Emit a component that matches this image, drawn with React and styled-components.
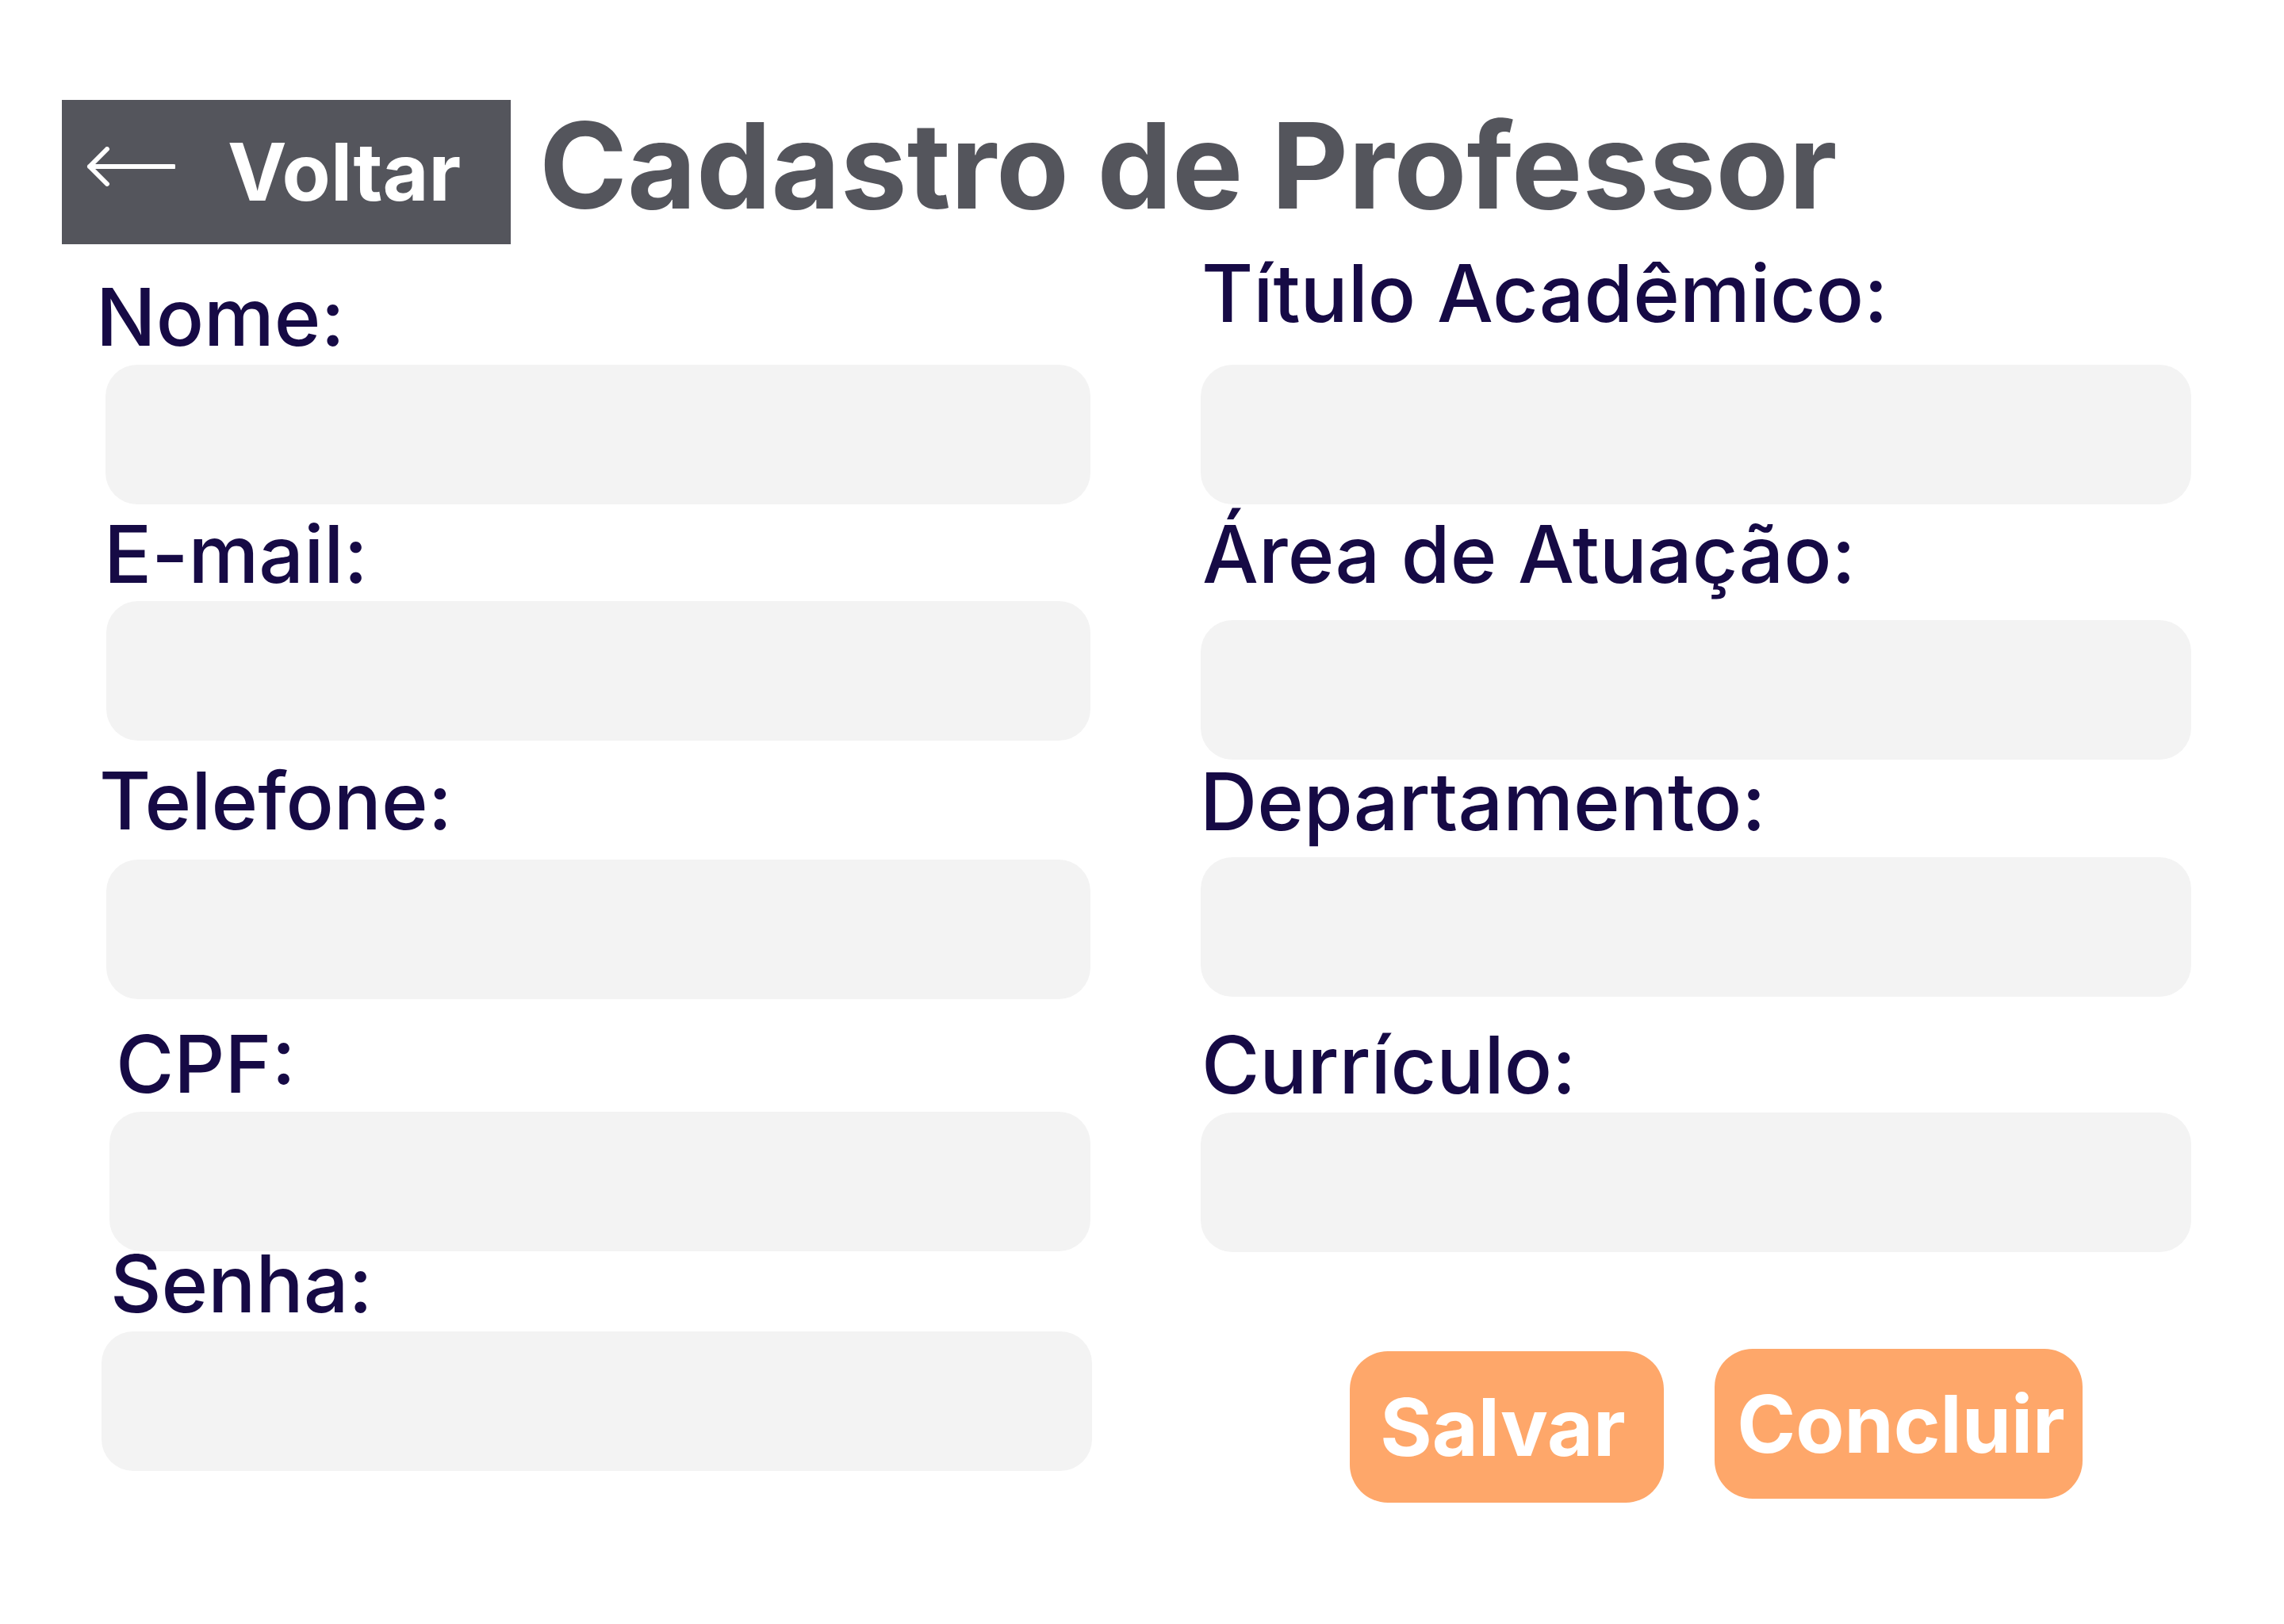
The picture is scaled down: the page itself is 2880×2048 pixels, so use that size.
import React from "react";
import styled, { createGlobalStyle } from "styled-components";

const GlobalStyle = createGlobalStyle`
  html, body {
    margin: 0;
    padding: 0;
    background: #ffffff;
  }

  body {
    font-family: Inter, "Noto Sans", sans-serif;
  }
`;

const leftFields = [
  { label: "Nome:", labelTop: 52, indent: 1, inputTop: 20, inputLeft: 13, inputRight: 2 },
  { label: "E-mail:", labelTop: 23, indent: 11, inputTop: 19, inputLeft: 14, inputRight: 2 },
  { label: "Telefone:", labelTop: 36, indent: 5, inputTop: 34, inputLeft: 14, inputRight: 2 },
  { label: "CPF:", labelTop: 42, indent: 26, inputTop: 20, inputLeft: 18, inputRight: 2 },
  { label: "Senha:", labelTop: 1, indent: 19, inputTop: 20, inputLeft: 8, inputRight: 0 },
];

const rightFields = [
  { label: "Título Acadêmico:", labelTop: 22, indent: 2, inputTop: 50, inputLeft: 1, inputRight: 0 },
  { label: "Área de Atuação:", labelTop: 23, indent: 3, inputTop: 43, inputLeft: 1, inputRight: 0 },
  { label: "Departamento:", labelTop: 13, indent: 0, inputTop: 30, inputLeft: 1, inputRight: 0 },
  { label: "Currículo:", labelTop: 46, indent: 2, inputTop: 20, inputLeft: 1, inputRight: 0 },
];

const ArrowLeft = () => (
  <svg width="112" height="50" viewBox="0 0 112 50" fill="none">
    <path
      d="M4 25 H110 M26 3 L4 25 L26 47"
      stroke="#ffffff"
      strokeWidth="6"
      strokeLinecap="round"
      strokeLinejoin="round"
    />
  </svg>
);

const Field = ({ label, labelTop, indent, inputTop, inputLeft, inputRight }) => (
  <>
    <Label $top={labelTop} $indent={indent}>
      {label}
    </Label>
    <Input type="text" $top={inputTop} $left={inputLeft} $right={inputRight} />
  </>
);

export default function App() {
  return (
    <>
      <GlobalStyle />
      <Page>
        <Header>
          <BackButton>
            <ArrowIcon>
              <ArrowLeft />
            </ArrowIcon>
            Voltar
          </BackButton>
          <Title>Cadastro de Professor</Title>
        </Header>

        <Form>
          <Column>
            {leftFields.map((f) => (
              <Field key={f.label} {...f} />
            ))}
          </Column>

          <Column>
            {rightFields.map((f) => (
              <Field key={f.label} {...f} />
            ))}
            <Actions>
              <ActionButton $width={396} $top={3} $shift={-10}>
                Salvar
              </ActionButton>
              <ActionButton $width={464} $height={189} $shift={6}>
                Concluir
              </ActionButton>
            </Actions>
          </Column>
        </Form>
      </Page>
    </>
  );
}

const Page = styled.div`
  width: 2880px;
  min-height: 2048px;
  box-sizing: border-box;
  padding: 126px 0 0 78px;
  background: #ffffff;
`;

const Header = styled.div`
  display: flex;
  align-items: flex-start;
  gap: 36px;
  height: 182px;
`;

const BackButton = styled.button`
  display: flex;
  align-items: center;

  width: 566px;
  height: 182px;
  padding: 0 0 0 31px;
  box-sizing: border-box;

  border: none;
  border-radius: 0;
  background: #54555c;
  cursor: pointer;

  font-family: Inter, sans-serif;
  font-size: 100px;
  font-weight: 700;
  line-height: 1;
  color: #ffffff;
`;

const ArrowIcon = styled.span`
  display: flex;
  margin: 0 66px 14px 0;
`;

const Title = styled.h1`
  margin: 8px 0 0;

  font-family: Inter, sans-serif;
  font-size: 150px;
  font-weight: 700;
  line-height: 150px;
  color: #54555c;
  white-space: nowrap;
`;

const Form = styled.div`
  display: grid;
  grid-template-columns: 1257px 1250px;
  column-gap: 136px;
  margin-left: 42px;
`;

const Column = styled.div`
  display: flex;
  flex-direction: column;
`;

const Label = styled.label`
  display: block;
  margin: ${(p) => p.$top}px 0 0 ${(p) => p.$indent}px;

  font-family: Inter, sans-serif;
  font-size: 100px;
  font-weight: 500;
  line-height: 80px;
  color: #160a45;
  white-space: nowrap;
`;

const Input = styled.input`
  display: block;
  height: 176px;
  margin: ${(p) => p.$top}px ${(p) => p.$right}px 0 ${(p) => p.$left}px;
  padding: 0 40px;
  box-sizing: border-box;

  border: none;
  border-radius: 40px;
  background: #f3f3f3;
  outline: none;

  font-family: Inter, sans-serif;
  font-size: 60px;
  color: #160a45;
`;

const Actions = styled.div`
  display: flex;
  align-items: flex-start;
  gap: 64px;
  margin-top: 122px;
  padding-left: 189px;
`;

const ActionButton = styled.button`
  display: flex;
  align-items: center;
  justify-content: center;

  width: ${(p) => p.$width}px;
  height: ${(p) => p.$height || 191}px;
  margin-top: ${(p) => p.$top || 0}px;
  padding: 0 ${(p) => (p.$shift < 0 ? -p.$shift : 0)}px 0 ${(p) => (p.$shift > 0 ? p.$shift : 0)}px;
  box-sizing: border-box;

  border: none;
  border-radius: 48px;
  background: #fea76a;
  cursor: pointer;

  font-family: Inter, sans-serif;
  font-size: 100px;
  font-weight: 700;
  line-height: 1;
  color: #ffffff;
`;
